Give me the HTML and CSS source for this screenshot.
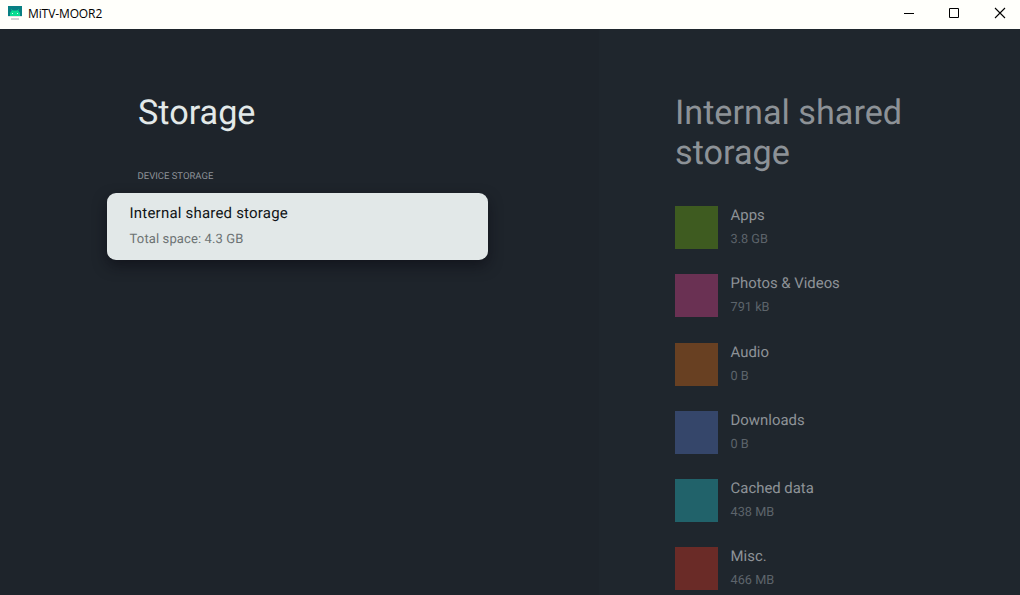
FILE: index.html
```html
<!DOCTYPE html>
<html lang="en">
<head>
  <meta charset="UTF-8" />
  <meta name="viewport" content="width=device-width, initial-scale=1" />
  <title>MiTV-MOOR2</title>
  <link rel="stylesheet" href="styles.css">
</head>
<body>

<header class="titlebar">
  <svg class="app-icon" width="14" height="14" viewBox="0 0 14 14">
    <rect width="14" height="10" fill="#087f83"/>
    <path d="M2 10V7q1-2 2-2.500h6q1 .5 2 2.500v3z" fill="#08dc91"/>
    <path d="M3.500 3.500l1 1.500M10.500 3.500L9.500 5" stroke="#08dc91"/>
    <path d="M4 7h1v1H4zM9 7h1v1H9z" fill="#d9fff0"/>
    <path d="M0 10h14v1H0z" fill="#e4e6e6"/>
    <path d="M3 12h8v2H3z" fill="#d0d3d3"/>
  </svg>
  <span class="window-title">MiTV-MOOR2</span>
  <div class="window-buttons">
    <svg width="46" height="28" viewBox="0 0 46 28"><path d="M18 13.5h10" stroke="#000"/></svg>
    <svg width="46" height="28" viewBox="0 0 46 28"><path d="M17.5 8.5h9v9h-9z" fill="none" stroke="#000"/></svg>
    <svg width="46" height="28" viewBox="0 0 46 28"><path d="M17 8l10 10M27 8L17 18" stroke="#000" stroke-width="1.1"/></svg>
  </div>
</header>

<div class="screen">
  <main class="panel">
    <h1>Storage</h1>
    <h2 class="category">DEVICE STORAGE</h2>
    <div class="card">
      <div class="card-title">Internal shared storage</div>
      <div class="card-summary">Total space: 4.3 GB</div>
    </div>
  </main>

  <aside class="preview">
    <h1>Internal shared storage</h1>
    <ul class="usage">
      <li><span class="swatch apps"></span><div><div class="name">Apps</div><div class="size">3.8 GB</div></div></li>
      <li><span class="swatch photos"></span><div><div class="name">Photos &amp; Videos</div><div class="size">791 kB</div></div></li>
      <li><span class="swatch audio"></span><div><div class="name">Audio</div><div class="size">0 B</div></div></li>
      <li><span class="swatch downloads"></span><div><div class="name">Downloads</div><div class="size">0 B</div></div></li>
      <li><span class="swatch cached"></span><div><div class="name">Cached data</div><div class="size">438 MB</div></div></li>
      <li><span class="swatch misc"></span><div><div class="name">Misc.</div><div class="size">466 MB</div></div></li>
    </ul>
  </aside>
</div>

</body>
</html>
```

FILE: styles.css
```css
*, *::before, *::after { margin: 0; padding: 0; box-sizing: border-box; }
body {
  height: 100vh;
  overflow: hidden;
  display: flex;
  flex-direction: column;
  font-family: Roboto, sans-serif;
  background: #1e242b;
}
.titlebar {
  flex: none;
  height: 29px;
  padding-left: 8px;
  display: flex;
  align-items: flex-start;
  background: #fffffb;
}
.app-icon {
  margin-top: 6px;
}
.window-title {
  margin-left: 6px;
  font-family: "Open Sans", sans-serif;
  font-size: 12px;
  line-height: 27px;
  letter-spacing: -0.1px;
  color: #000;
}
.window-buttons {
  margin-left: auto;
  margin-right: -4px;
  display: flex;
}
.window-buttons svg {
  display: block;
}
.screen {
  flex: 1;
  min-height: 0;
  display: flex;
  text-rendering: geometricPrecision;
}
h1 {
  font-size: 34.2px;
  font-weight: 400;
  line-height: 40px;
}
.panel {
  width: 599px;
  padding: 64px 111px 0 107px;
  background: #1e242b;
}
.panel h1 {
  padding-left: 31px;
  color: #e3e9e9;
}
.category {
  margin: 36px 0 8px;
  padding-left: 30.5px;
  font-size: 9.5px;
  font-weight: 400;
  line-height: 16px;
  color: #8d9298;
}
.card {
  height: 67px;
  padding: 10px 22.6px;
  border-radius: 9px;
  background: #e2e8e8;
  box-shadow: 0 6px 14px rgba(12, 12, 20, 0.6);
}
.card-title {
  font-size: 15px;
  line-height: 20px;
  letter-spacing: 0.2px;
  color: #101416;
}
.card-summary {
  margin-top: 8px;
  font-size: 13px;
  line-height: 18px;
  letter-spacing: 0.12px;
  color: #6c7273;
}
.preview {
  flex: 1;
  padding: 64px 76px 0;
  background: #1f262d;
}
.preview h1 {
  color: #8d9297;
}
.usage {
  margin-top: 33px;
  list-style: none;
}
.usage li {
  height: 68.25px;
  display: flex;
  gap: 12.6px;
}
.swatch {
  width: 43px;
  height: 43px;
}
.apps { background: #3e5b20; }
.photos { background: #6a3153; }
.audio { background: #684022; }
.downloads { background: #35466a; }
.cached { background: #21626a; }
.misc { background: #6a2b27; }
.name {
  font-size: 14.9px;
  line-height: 18px;
  color: #8e9398;
}
.size {
  margin-top: 7px;
  font-size: 12.7px;
  line-height: 17px;
  color: #5d646b;
}
```
